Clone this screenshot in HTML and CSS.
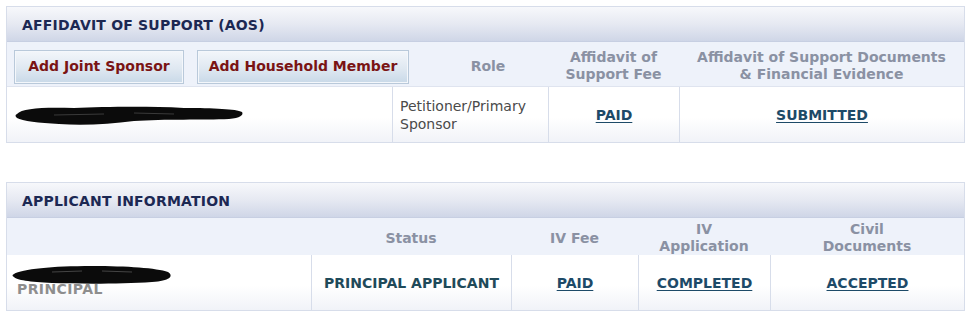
FILE: index.html
```html
<!DOCTYPE html>
<html>
<head>
<meta charset="utf-8">
<link rel="stylesheet" href="styles.css">
</head>
<body>
<section class="panel">
  <div class="panel-head">AFFIDAVIT OF SUPPORT (AOS)</div>
  <div class="row colhead aos-head">
    <div class="cell btns">
      <button class="btn btn-joint">Add Joint Sponsor</button>
      <button class="btn btn-house">Add Household Member</button>
    </div>
    <div class="cell c-role">Role</div>
    <div class="cell c-fee">Affidavit of<br>Support Fee</div>
    <div class="cell c-docs">Affidavit of Support Documents<br>&amp; Financial Evidence</div>
  </div>
  <div class="row data aos-data">
    <div class="cell d-name">
      <svg class="redact" width="230" height="26" viewBox="0 0 230 26"><path d="M3 12 C8 6 30 5 60 6 C90 5 130 4 170 6 C200 6 222 7 228 10 C230 13 226 16 215 17 C190 18 150 17 120 19 C95 22 70 24 45 22 C25 21 8 19 3 16 C1 14 1 13 3 12 Z" fill="#0b0b0b"/><path d="M40 13 L90 12 M120 11 L160 12" stroke="#3a3a3a" stroke-width="1"/></svg>
    </div>
    <div class="cell d-role">Petitioner/Primary<br>Sponsor</div>
    <div class="cell d-fee"><a href="#">PAID</a></div>
    <div class="cell d-docs"><a href="#">SUBMITTED</a></div>
  </div>
</section>

<section class="panel panel2">
  <div class="panel-head">APPLICANT INFORMATION</div>
  <div class="row colhead app-head">
    <div class="cell a-name"></div>
    <div class="cell a-status">Status</div>
    <div class="cell a-fee">IV Fee</div>
    <div class="cell a-app">IV<br>Application</div>
    <div class="cell a-civil">Civil<br>Documents</div>
  </div>
  <div class="row data app-data">
    <div class="cell a-name name2">
      <svg class="redact" width="162" height="24" viewBox="0 0 162 24"><path d="M2 11 C10 6 40 3 80 3 C115 3 145 5 156 9 C162 13 158 18 140 19 C110 21 70 21 40 20 C18 19 4 17 2 14 C0 13 0 12 2 11 Z" fill="#0b0b0b"/><path d="M40 9 L70 8 M90 8 L120 9" stroke="#444" stroke-width="1"/></svg>
      <span class="principal">PRINCIPAL</span>
    </div>
    <div class="cell a-status strong">PRINCIPAL APPLICANT</div>
    <div class="cell a-fee"><a href="#">PAID</a></div>
    <div class="cell a-app"><a href="#">COMPLETED</a></div>
    <div class="cell a-civil"><a href="#">ACCEPTED</a></div>
  </div>
</section>
</body>
</html>
```
FILE: styles.css
```css
html, body {
  margin: 0;
  padding: 0;
  background: #ffffff;
}
body {
  padding: 6px 0 0 6px;
  font-family: "DejaVu Sans", Verdana, sans-serif;
  font-size: 14px;
}
.panel {
  width: 957px;
  border: 1px solid #d7ddea;
  background: #fff;
}
.panel2 {
  margin-top: 39px;
}
.panel-head {
  height: 35px;
  box-sizing: border-box;
  padding: 10px 0 0 15px;
  font-weight: bold;
  font-size: 14px;
  color: #1c2853;
  letter-spacing: 0.2px;
  background: linear-gradient(to bottom, #f7f8fb 0%, #e6e9f2 50%, #cfd6e7 100%);
  border-bottom: 1px solid #c7cfe2;
}
.row {
  display: flex;
}
.cell {
  box-sizing: border-box;
}
.colhead {
  background: #eef2fa;
  color: #8a91a3;
  font-weight: bold;
  font-size: 14px;
  line-height: 17px;
  text-align: center;
}
.aos-head {
  height: 44px;
}
.btns {
  width: 421px;
  display: flex;
  gap: 13px;
  padding: 8px 0 0 7px;
  text-align: left;
}
.btn {
  height: 34px;
  font-family: "DejaVu Sans", Verdana, sans-serif;
  font-weight: bold;
  font-size: 14px;
  color: #7a1414;
  border: 1px solid #b9c9da;
  box-shadow: inset 0 0 0 1px #f4f7fb;
  background: linear-gradient(to bottom, #f3f6fa 0%, #dfe8f1 55%, #c9d9e8 100%);
  padding: 0 6px 2px;
  margin: 0;
}
.btn-joint { width: 170px; }
.btn-house { width: 212px; }
.c-role {
  width: 120px;
  padding-top: 16px;
}
.c-fee {
  width: 131px;
  padding-top: 7px;
}
.c-docs {
  flex: 1;
  padding-top: 7px;
}
.data {
  background: linear-gradient(to bottom, #ffffff 0%, #ffffff 55%, #f1f3f8 100%);
  color: #4a4a4a;
}
.data .cell + .cell {
  border-left: 1px solid #d7ddea;
}
.aos-data {
  height: 55px;
  border-top: 1px solid #dfe4ef;
}
.d-name {
  width: 385px;
  padding: 15px 0 0 7px;
}
.redact { display: block; }
.d-role {
  width: 156px;
  padding: 10px 0 0 7px;
  line-height: 18px;
}
.d-fee {
  width: 131px;
  display: flex;
  align-items: center;
  justify-content: center;
}
.d-docs {
  flex: 1;
  display: flex;
  align-items: center;
  justify-content: center;
}
a {
  color: #1d4a68;
  font-weight: bold;
  text-decoration: underline;
  text-underline-offset: 2px;
}
.app-head {
  height: 37px;
}
.app-head .cell { padding-top: 12px; }
.app-head .a-app, .app-head .a-civil { padding-top: 3px; }
.app-data {
  height: 55px;
}
.a-name { width: 304px; }
.a-status { width: 200px; }
.a-fee { width: 127px; }
.a-app { width: 132px; }
.a-civil { flex: 1; }
.app-data .cell {
  display: flex;
  align-items: center;
  justify-content: center;
}
.app-data .name2 {
  display: block;
  padding: 8px 0 0 5px;
}
.principal {
  display: block;
  margin-top: -6px;
  padding-left: 5px;
  color: #8e8e8e;
  font-weight: bold;
  letter-spacing: 0.4px;
}
.strong {
  font-weight: bold;
  color: #1f4a5a;
}
```
